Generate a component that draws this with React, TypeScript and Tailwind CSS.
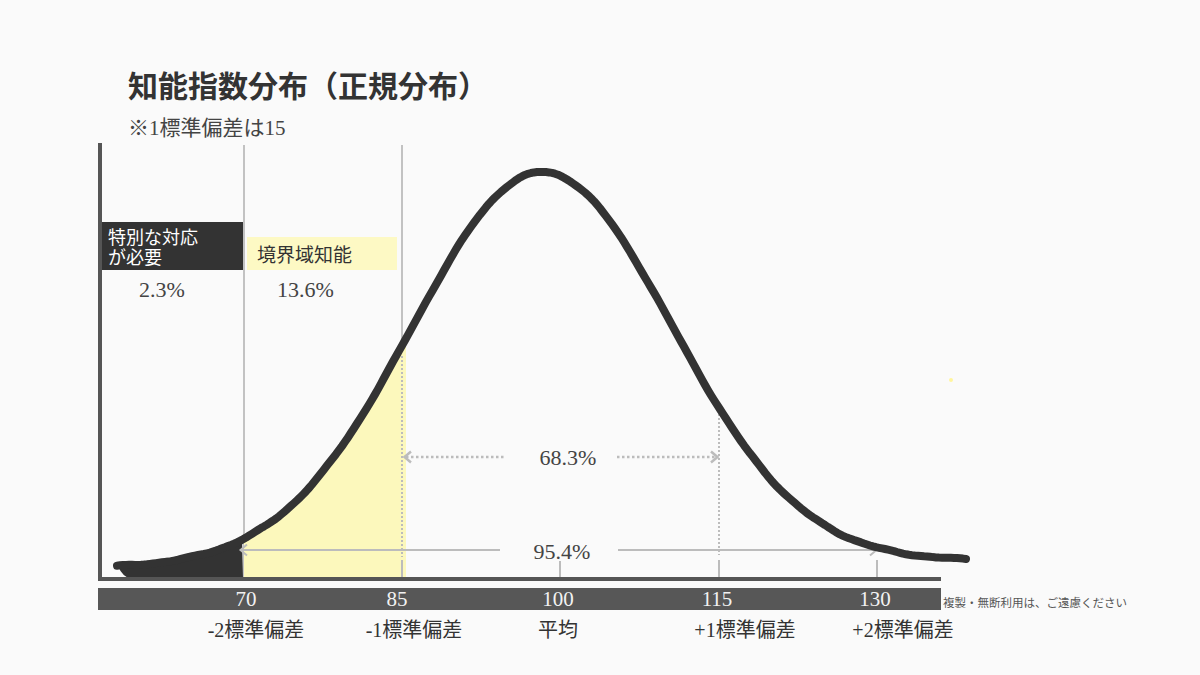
const wobble = (x: number) => 0.45 * Math.sin(x / 11) + 0.3 * Math.sin(x / 5.3);

const curveY = (x: number) => {
  const base = 568 - ((x - 115) * 7) / 853;
  const d = x - 542;
  return base - 392.5 * Math.exp(-(d * d) / (2 * 130 * 130)) + wobble(x);
};

const pts = (from: number, to: number, step: number, dy = 0) => {
  const out: string[] = [];
  for (let x = from; x <= to; x += step) out.push(`${x},${(curveY(x) + dy).toFixed(1)}`);
  return out;
};

const curvePath = "M" + pts(117, 968, 3).join(" L");
const yellowPath = `M244,578 L${pts(244, 406, 2).join(" L")} L406,578 Z`;
const tailStart = (curveY(117) - 4).toFixed(1);
const tailPath = `M117,${tailStart} L${pts(118, 243, 2, -3).join(" L")} L243,578 L128,578 Q119,573 117,${tailStart} Z`;

const ticks = [
  { x: 246, n: "70" },
  { x: 397, n: "85" },
  { x: 558, n: "100" },
  { x: 717, n: "115" },
  { x: 875, n: "130" },
];

const labels = [
  { x: 256, t: "-2標準偏差" },
  { x: 414, t: "-1標準偏差" },
  { x: 558, t: "平均" },
  { x: 745, t: "+1標準偏差" },
  { x: 903, t: "+2標準偏差" },
];

const serif = "font-[Liberation_Serif,Noto_Sans_CJK_JP,serif]";

export default function App() {
  return (
    <div className="relative h-[675px] w-[1200px] overflow-hidden bg-[#fafafa] font-[Noto_Sans_CJK_JP,sans-serif] text-[#333]">
      <div className="pl-[128px] pt-[64px]">
        <h1 className="h-[40px] text-[30px] font-bold leading-[40px] text-[#333]">知能指数分布（正規分布）</h1>
        <p className={`mt-[10px] text-[21px] leading-[28px] text-[#444] ${serif}`}>※1標準偏差は15</p>
      </div>

      <div className="relative mt-[1px] h-[439px] w-full">
        <svg className="absolute inset-0" width="1200" height="439" viewBox="0 143 1200 439">
          {/* section lines */}
          <line x1="244" y1="145" x2="244" y2="578" stroke="#c2c2c2" strokeWidth="2" />
          <line x1="402" y1="145" x2="402" y2="356" stroke="#c2c2c2" strokeWidth="2" />

          <path d={yellowPath} fill="#fcf8bc" />
          <path d={tailPath} fill="#333" />

          {/* dotted guides */}
          <line x1="402" y1="356" x2="402" y2="557" stroke="#bcbcbc" strokeWidth="2" strokeDasharray="2 2" />
          <line x1="719" y1="410" x2="719" y2="555" stroke="#bcbcbc" strokeWidth="2" strokeDasharray="2 2" />
          <line x1="402" y1="560" x2="402" y2="577" stroke="#bcbcbc" strokeWidth="2" />
          <line x1="560" y1="561" x2="560" y2="577" stroke="#bcbcbc" strokeWidth="2" />
          <line x1="719" y1="560" x2="719" y2="577" stroke="#bcbcbc" strokeWidth="2" />
          <line x1="877" y1="560" x2="877" y2="577" stroke="#bcbcbc" strokeWidth="2" />

          {/* 68.3% arrows */}
          <line x1="406" y1="457" x2="505" y2="457" stroke="#bcbcbc" strokeWidth="2.5" strokeDasharray="2.5 2.5" />
          <polyline points="411,451.5 404.5,457 411,462.5" fill="none" stroke="#bcbcbc" strokeWidth="2.5" />
          <line x1="617" y1="457" x2="715" y2="457" stroke="#bcbcbc" strokeWidth="2.5" strokeDasharray="2.5 2.5" />
          <polyline points="711,451.5 717.5,457 711,462.5" fill="none" stroke="#bcbcbc" strokeWidth="2.5" />

          {/* 95.4% arrows */}
          <line x1="241" y1="550" x2="500" y2="550" stroke="#bcbcbc" strokeWidth="2" />
          <polyline points="247,544.5 240.5,550 247,555.5" fill="none" stroke="#bcbcbc" strokeWidth="2" />
          <line x1="618" y1="550" x2="875" y2="550" stroke="#bcbcbc" strokeWidth="2" />
          <polyline points="870,544.5 876.5,550 870,555.5" fill="none" stroke="#bcbcbc" strokeWidth="2" />

          <path d={curvePath} fill="none" stroke="#333" strokeWidth="8" strokeLinecap="round" strokeLinejoin="round" />

          {/* axes */}
          <rect x="98" y="143" width="4" height="438" fill="#555" />
          <rect x="98" y="577" width="843" height="4" fill="#555" />
          <circle cx="951" cy="380" r="2" fill="#fff59d" />
        </svg>

        {/* category columns */}
        <div className={`relative flex pl-[102px] text-[22px] leading-[22px] text-[#444] ${serif}`}>
          <div className="flex w-[141px] flex-col pt-[79px]">
            <p className="flex h-[48px] items-center bg-[#333] pl-[6px] font-[Noto_Sans_CJK_JP,sans-serif] text-[18px] leading-[20px] text-white">
              <span>
                特別な対応
                <br />
                が必要
              </span>
            </p>
            <span className="pl-[37px] pt-[9px]">2.3%</span>
          </div>
          <div className="ml-[4px] flex w-[150px] flex-col pt-[94px]">
            <div className="flex h-[33px] items-center bg-[#fdf9c4] pl-[10px] font-[Noto_Sans_CJK_JP,sans-serif] text-[19px] text-[#333]">
              境界域知能
            </div>
            <span className="pl-[30px] pt-[9px]">13.6%</span>
          </div>
        </div>

        <span className={`absolute left-[568px] top-[304px] -translate-x-1/2 text-[22px] leading-[22px] text-[#444] ${serif}`}>68.3%</span>
        <span className={`absolute left-[562px] top-[398px] -translate-x-1/2 text-[22px] leading-[22px] text-[#444] ${serif}`}>95.4%</span>
      </div>

      <div className="mt-[6px] flex items-start">
        <div className={`relative ml-[98px] h-[22px] w-[843px] bg-[#575757] text-[21px] leading-[22px] text-[#f2f2f2] ${serif}`}>
          {ticks.map((t) => (
            <span key={t.n} className="absolute top-0 -translate-x-1/2" style={{ left: t.x - 98 }}>
              {t.n}
            </span>
          ))}
        </div>
        <span className="ml-[2px] mt-[7px] text-[11.5px] leading-[14px] text-[#555]">複製・無断利用は、ご遠慮ください</span>
      </div>

      <div className={`relative h-[40px] w-full text-[20px] leading-[24px] text-[#333] ${serif}`}>
        {labels.map((l) => (
          <span key={l.t} className="absolute top-[8px] -translate-x-1/2 whitespace-nowrap" style={{ left: l.x }}>
            {l.t}
          </span>
        ))}
      </div>
    </div>
  );
}
